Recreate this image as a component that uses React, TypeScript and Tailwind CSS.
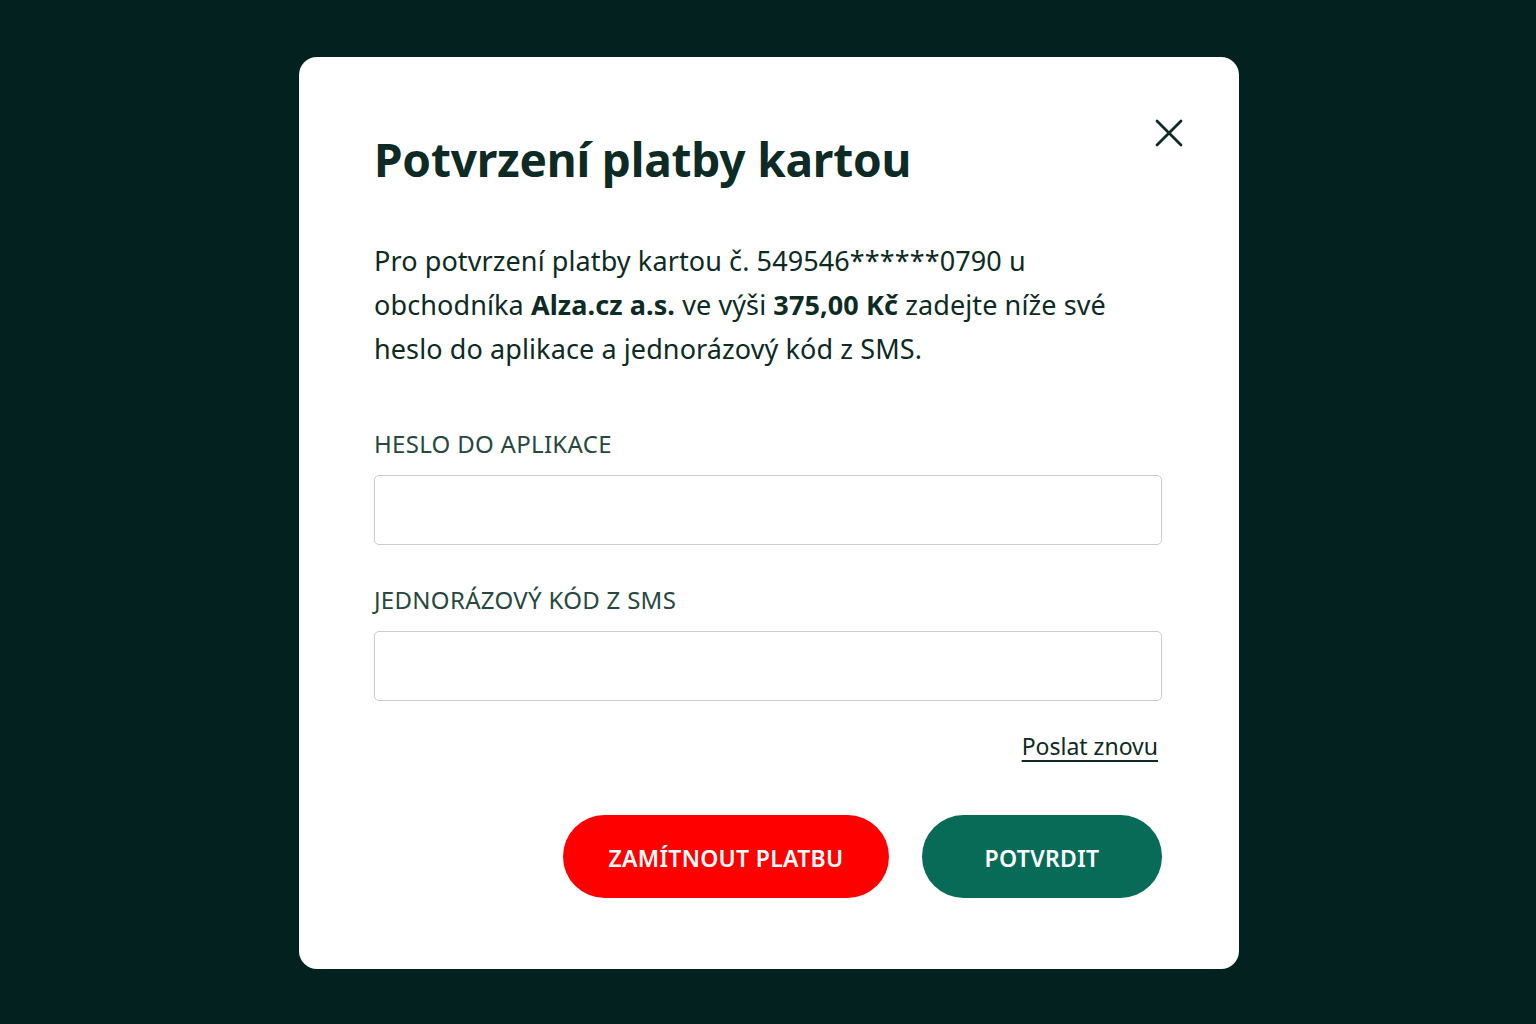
import { useState } from "react";

const font = { fontFamily: '"Noto Sans", "Open Sans", sans-serif' };

function CloseIcon() {
  return (
    <svg width="28" height="28" viewBox="0 0 28 28" fill="none">
      <path d="M2 2L26 26M26 2L2 26" stroke="#0d2a24" strokeWidth="2.8" strokeLinecap="round" />
    </svg>
  );
}

function Field({ label, value, onChange, type = "text" }: { label: string; value: string; onChange: (v: string) => void; type?: string }) {
  return (
    <div className="flex flex-col">
      <label className="text-[24px] leading-[30px] text-[#274840] tracking-[0.3px] uppercase">{label}</label>
      <input
        type={type}
        value={value}
        onChange={(e) => onChange(e.target.value)}
        className="mt-[16px] h-[70px] w-full rounded-[5px] border border-[#c9cdcc] bg-white px-4 text-[22px] outline-none"
      />
    </div>
  );
}

export default function App() {
  const [password, setPassword] = useState("");
  const [code, setCode] = useState("");

  return (
    <div className="min-h-screen w-full bg-[#03221f] flex items-start justify-center pt-[57px]" style={font}>
      <div className="relative ml-[2px] w-[940px] h-[912px] rounded-[18px] bg-white pl-[75px] pr-[77px] pt-[80px]">
        <button className="absolute right-[56px] top-[62px]">
          <CloseIcon />
        </button>

        <h1 className="-mt-[6px] text-[46px] leading-[56px] font-bold text-[#0d2a24] tracking-[-0.2px]">
          Potvrzení platby kartou
        </h1>

        <p className="mt-[52px] text-[27px] leading-[44px] text-[#0d2a24] tracking-[0.1px]">
          Pro potvrzení platby kartou č. 549546******0790 u
          <br />
          obchodníka <b className="font-bold">Alza.cz a.s.</b> ve výši <b className="font-bold">375,00 Kč</b> zadejte níže své
          <br />
          heslo do aplikace a jednorázový kód z SMS.
        </p>

        <div className="mt-[58px] flex flex-col gap-[40px]">
          <Field label="Heslo do aplikace" value={password} onChange={setPassword} type="password" />
          <Field label="Jednorázový kód z SMS" value={code} onChange={setCode} />
        </div>

        <div className="mt-[30px] flex justify-end pr-[4px]">
          <a href="#" className="text-[23px] leading-[30px] text-[#0d2a24] underline underline-offset-[5px]">
            Poslat znovu
          </a>
        </div>

        <div className="mt-[54px] flex justify-end gap-[33px]">
          <button className="h-[83px] w-[326px] rounded-full bg-[#ff0000] pt-[3px] text-[23px] font-semibold text-white tracking-[0.3px]">
            ZAMÍTNOUT PLATBU
          </button>
          <button className="h-[83px] w-[240px] rounded-full bg-[#086b57] pt-[3px] text-[23px] font-semibold text-white tracking-[0.3px]">
            POTVRDIT
          </button>
        </div>
      </div>
    </div>
  );
}
